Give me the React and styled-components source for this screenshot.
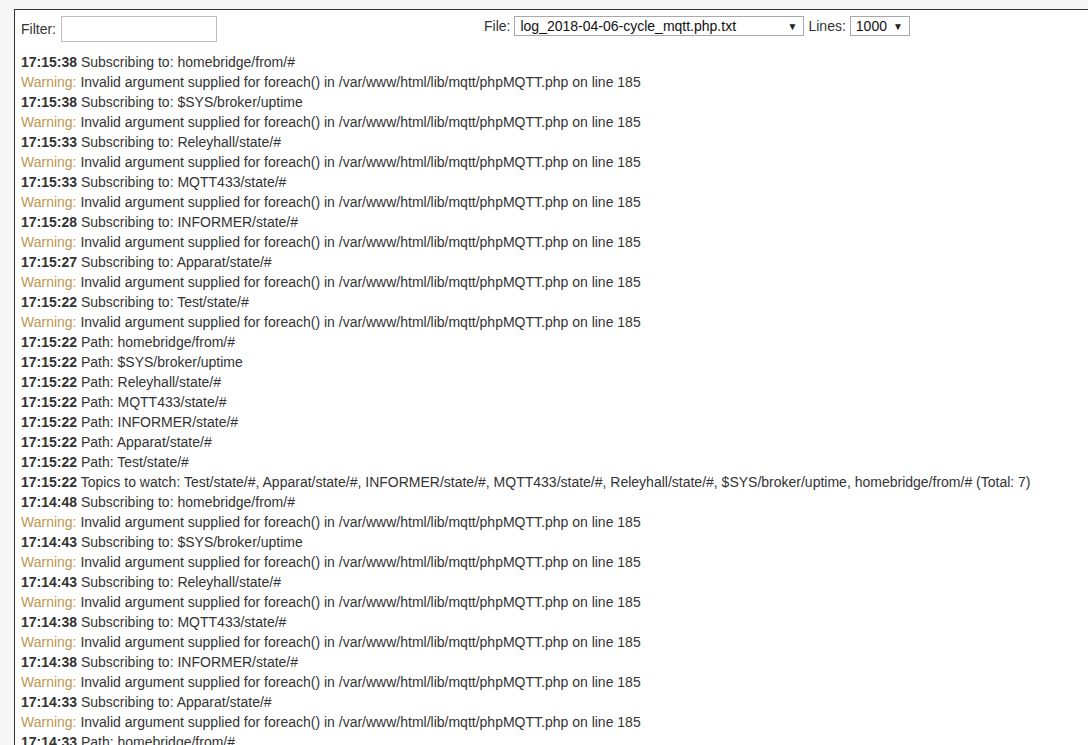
import React from 'react';
import styled, { createGlobalStyle } from 'styled-components';

const GlobalStyle = createGlobalStyle`
  html, body {
    margin: 0;
    padding: 0;
    overflow: hidden;
    background: #f7f7f7;
  }
  body {
    font-family: "Liberation Sans", Arial, Helvetica, sans-serif;
    font-size: 14px;
    color: #333;
  }
`;

const Page = styled.div`
  padding: 9px 0 0 14px;
  width: 1500px;
`;

const Panel = styled.div`
  background: #fff;
  border: 1px solid #333;
  padding: 6px 6px 0 6px;
  min-height: 800px;
`;

const Toolbar = styled.div`
  display: flex;
  align-items: flex-start;
  height: 36px;
`;

const FilterGroup = styled.label`
  display: flex;
  align-items: center;
  gap: 5px;
  width: 463px;
`;

const FilterInput = styled.input`
  box-sizing: border-box;
  width: 156px;
  height: 26px;
  border: 1px solid #bdbdbd;
  padding: 2px 4px;
  font: inherit;
`;

const SelectGroup = styled.div`
  display: flex;
  align-items: center;
  gap: 4px;
`;

const FakeSelect = styled.div`
  box-sizing: border-box;
  display: flex;
  align-items: center;
  justify-content: space-between;
  width: ${(p) => p.width}px;
  height: 20px;
  padding: 0 6px 0 5px;
  border: 1px solid #a9a9a9;
  background: #fff;
  color: #111;
`;

const Arrow = styled.span`
  font-size: 10px;
  color: #222;
`;

const Log = styled.div`
  line-height: 20px;
`;

const Line = styled.div`
  white-space: nowrap;
`;

const Time = styled.b`
  font-weight: bold;
`;

const Warn = styled.span`
  color: #bf9650;
`;

const WARNING = 'Invalid argument supplied for foreach() in /var/www/html/lib/mqtt/phpMQTT.php on line 185';

const entries = [
  ['17:15:38', 'Subscribing to: homebridge/from/#'],
  ['w'],
  ['17:15:38', 'Subscribing to: $SYS/broker/uptime'],
  ['w'],
  ['17:15:33', 'Subscribing to: Releyhall/state/#'],
  ['w'],
  ['17:15:33', 'Subscribing to: MQTT433/state/#'],
  ['w'],
  ['17:15:28', 'Subscribing to: INFORMER/state/#'],
  ['w'],
  ['17:15:27', 'Subscribing to: Apparat/state/#'],
  ['w'],
  ['17:15:22', 'Subscribing to: Test/state/#'],
  ['w'],
  ['17:15:22', 'Path: homebridge/from/#'],
  ['17:15:22', 'Path: $SYS/broker/uptime'],
  ['17:15:22', 'Path: Releyhall/state/#'],
  ['17:15:22', 'Path: MQTT433/state/#'],
  ['17:15:22', 'Path: INFORMER/state/#'],
  ['17:15:22', 'Path: Apparat/state/#'],
  ['17:15:22', 'Path: Test/state/#'],
  ['17:15:22', 'Topics to watch: Test/state/#, Apparat/state/#, INFORMER/state/#, MQTT433/state/#, Releyhall/state/#, $SYS/broker/uptime, homebridge/from/# (Total: 7)'],
  ['17:14:48', 'Subscribing to: homebridge/from/#'],
  ['w'],
  ['17:14:43', 'Subscribing to: $SYS/broker/uptime'],
  ['w'],
  ['17:14:43', 'Subscribing to: Releyhall/state/#'],
  ['w'],
  ['17:14:38', 'Subscribing to: MQTT433/state/#'],
  ['w'],
  ['17:14:38', 'Subscribing to: INFORMER/state/#'],
  ['w'],
  ['17:14:33', 'Subscribing to: Apparat/state/#'],
  ['w'],
  ['17:14:33', 'Path: homebridge/from/#'],
];

export default function App() {
  return (
    <Page>
      <GlobalStyle />
      <Panel>
        <Toolbar>
          <FilterGroup>
            Filter: <FilterInput type="text" />
          </FilterGroup>
          <SelectGroup>
            File:
            <FakeSelect width={290}>
              log_2018-04-06-cycle_mqtt.php.txt <Arrow>▼</Arrow>
            </FakeSelect>
            Lines:
            <FakeSelect width={60}>
              1000 <Arrow>▼</Arrow>
            </FakeSelect>
          </SelectGroup>
        </Toolbar>
        <Log>
          {entries.map((e, i) =>
            e[0] === 'w' ? (
              <Line key={i}>
                <Warn>Warning:</Warn> {WARNING}
              </Line>
            ) : (
              <Line key={i}>
                <Time>{e[0]}</Time> {e[1]}
              </Line>
            )
          )}
        </Log>
      </Panel>
    </Page>
  );
}
